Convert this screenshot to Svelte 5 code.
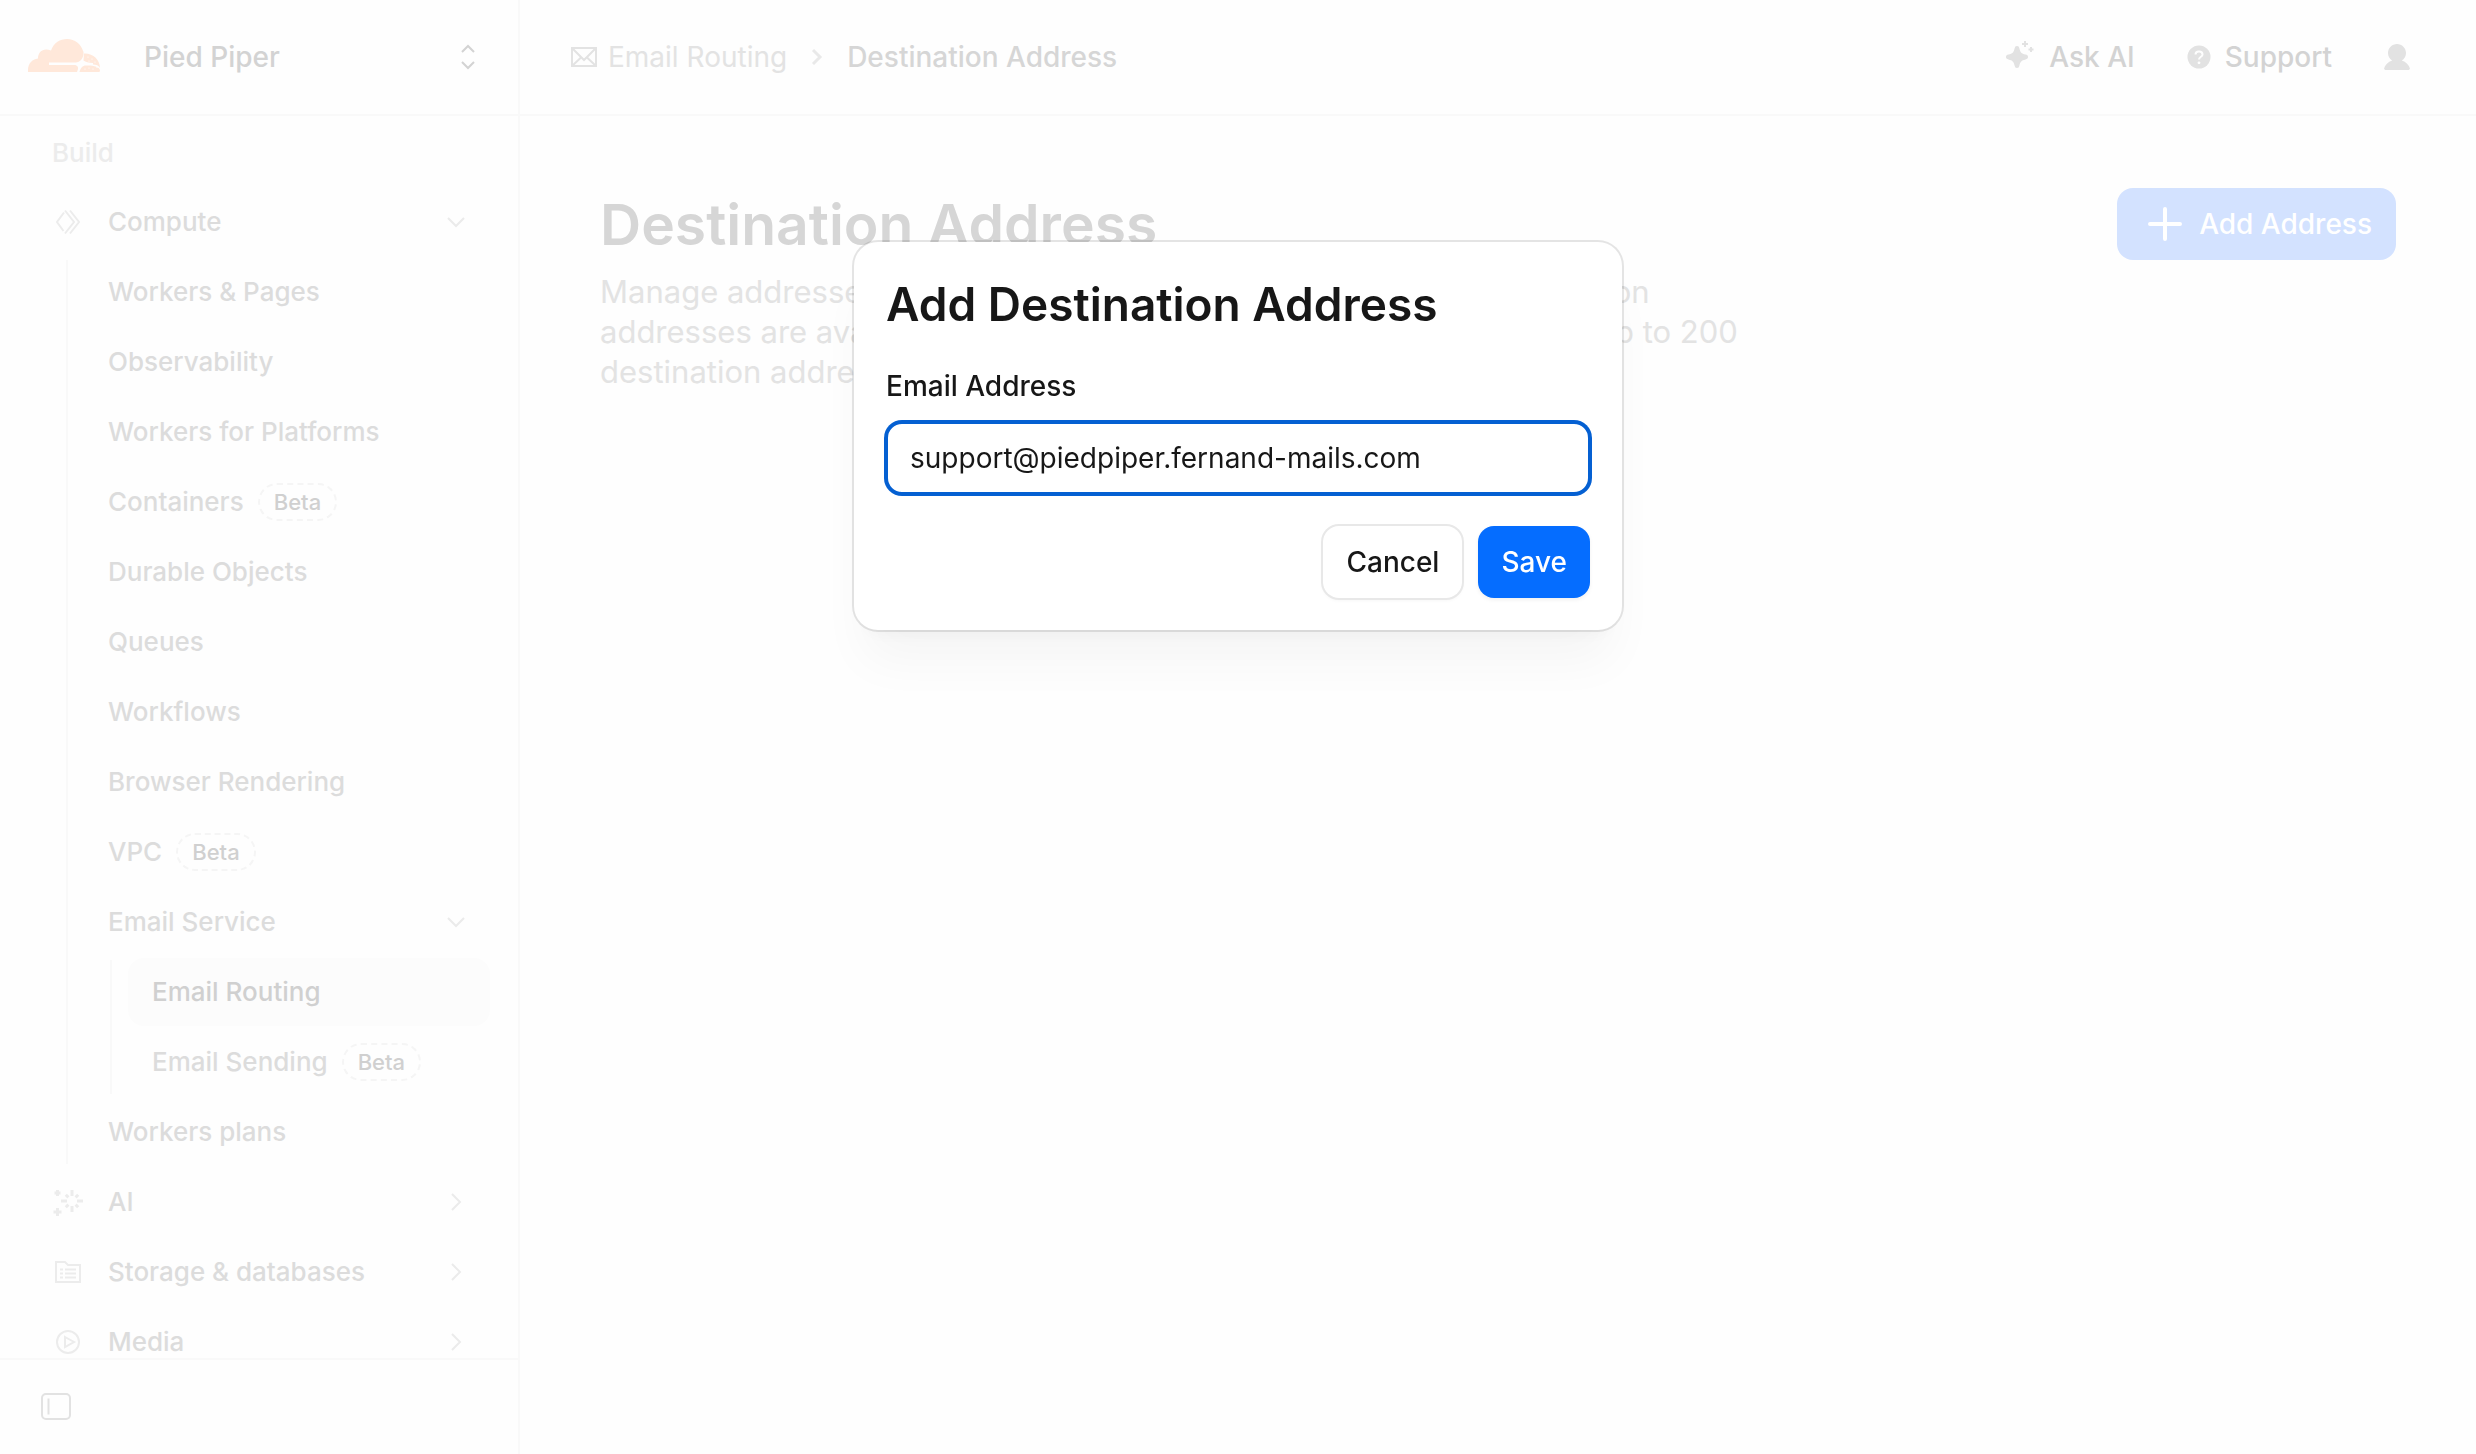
<script lang="ts">
	type NavItem = {
		label: string;
		icon?: string;
		beta?: boolean;
		active?: boolean;
		open?: boolean;
		group?: boolean;
		children?: NavItem[];
	};

	let nav = $state<NavItem[]>([
		{
			label: 'Compute',
			icon: 'workers',
			group: true,
			open: true,
			children: [
				{ label: 'Workers & Pages' },
				{ label: 'Observability' },
				{ label: 'Workers for Platforms' },
				{ label: 'Containers', beta: true },
				{ label: 'Durable Objects' },
				{ label: 'Queues' },
				{ label: 'Workflows' },
				{ label: 'Browser Rendering' },
				{ label: 'VPC', beta: true },
				{
					label: 'Email Service',
					group: true,
					open: true,
					children: [
						{ label: 'Email Routing', active: true },
						{ label: 'Email Sending', beta: true }
					]
				},
				{ label: 'Workers plans' }
			]
		},
		{ label: 'AI', icon: 'ai', group: true },
		{ label: 'Storage & databases', icon: 'storage', group: true },
		{ label: 'Media', icon: 'media', group: true }
	]);

	let showModal = $state(true);
	let email = $state('support@piedpiper.fernand-mails.com');

	function closeModal() {
		showModal = false;
	}

	function save(event: SubmitEvent) {
		event.preventDefault();
		closeModal();
	}
</script>

<svelte:head>
	<title>Destination Address</title>
</svelte:head>

{#snippet navIcon(name: string)}
	<svg class="nav-icon" viewBox="0 0 32 32" aria-hidden="true">
		{#if name === 'workers'}
			<path d="M12 6.500 5 16l6.500 9M13 4.500 22 16l-9 11.500M18 4.500 27 16l-9 11.500" />
		{:else if name === 'ai'}
			<path
				stroke-width="3"
				d="M20 4v6M20 20v6M9 15h6M25 15h6M13.800 8.800l2.600 2.600M23.600 18.600l2.600 2.600M26.200 8.800l-2.600 2.600M16.400 18.600l-2.600 2.600M5.500 4v6M2.500 7h6M5.500 22v8M1.500 26h8"
			/>
		{:else if name === 'storage'}
			<path d="M4 6h9l3 3h12v17H4z" />
			<path d="M8 13.500h3M13 13.500h11M8 17.500h3M13 17.500h11M8 21.500h3M13 21.500h11" />
		{:else if name === 'media'}
			<circle cx="16" cy="16" r="11" />
			<path d="M13 11l9 5-9 5z" />
		{/if}
	</svg>
{/snippet}

{#snippet navList(items: NavItem[], depth: number)}
	<ul class={['list', depth > 0 && 'nested']}>
		{#each items as item}
			<li>
				{#if item.group}
					<button class="row" aria-expanded={!!item.open} onclick={() => (item.open = !item.open)}>
						{#if item.icon}{@render navIcon(item.icon)}{/if}
						<span>{item.label}</span>
						<svg class="caret" viewBox="0 0 20 20" aria-hidden="true">
							<path d={item.open ? 'M2 6l8 8 8-8' : 'M6 2l8 8-8 8'} />
						</svg>
					</button>
				{:else}
					<a class={['row', item.active && 'active']} href="#{item.label}">
						<span>{item.label}</span>
						{#if item.beta}<span class="beta">Beta</span>{/if}
					</a>
				{/if}
				{#if item.open && item.children}
					{@render navList(item.children, depth + 1)}
				{/if}
			</li>
		{/each}
	</ul>
{/snippet}

<div class="layout">
	<aside class="sidebar">
		<div class="account">
			<svg class="logo" viewBox="0 0 72 36" aria-hidden="true">
				<path
					d="M0 33v-2c0-6 4-11 10-11.500C10 13 15 8.500 23 11.500 26 3.500 32 0 39 0c8 0 14 5 16.500 13 .5 6-3.500 10.500-8 10.500H21v2.500h25c3 0 4.500 2 4 4l-1 3z"
				/>
				<path d="M56 14.500c9-.5 16 6.500 16 14.500-1-2.500-4-3.500-7-3.500v-1.500c-4.500 0-7.500-1-9.500-2.500z" />
				<path d="M51.500 33c1-4 3-6.500 6.500-6.500 6-.5 14 1 14 5l-.5 1.500z" />
				<g class="dots">
					<circle cx="60" cy="18" r=".6" />
					<circle cx="64" cy="20" r=".6" />
					<circle cx="67" cy="23" r=".6" />
					<circle cx="61" cy="22" r=".6" />
					<circle cx="57" cy="30" r=".6" />
					<circle cx="61" cy="29" r=".6" />
					<circle cx="65" cy="30" r=".6" />
					<circle cx="69" cy="28.500" r=".6" />
				</g>
			</svg>
			<button class="switcher">
				<span>Pied Piper</span>
				<svg viewBox="0 0 16 26" aria-hidden="true">
					<path d="M2 8l6-6 6 6M2 18l6 6 6-6" />
				</svg>
			</button>
		</div>
		<nav class="nav" aria-label="Main">
			<p class="section">Build</p>
			{@render navList(nav, 0)}
		</nav>
		<div class="collapse">
			<button aria-label="Collapse sidebar">
				<svg viewBox="0 0 32 32" aria-hidden="true">
					<rect x="2" y="3" width="28" height="25" rx="4" />
					<path d="M8.500 7.500v16" />
				</svg>
			</button>
		</div>
	</aside>

	<div class="page">
		<header class="topbar">
			<nav class="crumbs" aria-label="Breadcrumb">
				<a href="#email-routing">
					<svg class="mail" viewBox="0 0 28 22" aria-hidden="true">
						<path d="M2 2h24v18H2zM2 2l12 12L26 2M2 20l9.500-9M26 20l-9.500-9" />
					</svg>
					Email Routing
				</a>
				<svg class="sep" viewBox="0 0 12 20" aria-hidden="true"><path d="M2 3l7 7-7 7" /></svg>
				<span class="current">Destination Address</span>
			</nav>
			<div class="tools">
				<button>
					<svg class="sparkle" viewBox="0 0 32 32" aria-hidden="true">
						<path
							d="M14 5c1.500 0 2 .8 2.400 2.500 1 4 2 5 6.100 6.100 1.700.4 2.500.9 2.500 2.400s-.8 2-2.500 2.400c-4.100 1.100-5.100 2.100-6.100 6.100-.4 1.700-.9 2.500-2.400 2.500s-2-.8-2.400-2.500c-1-4-2-5-6.100-6.100C3.800 18 3 17.500 3 16s.8-2 2.500-2.400c4.100-1.100 5.100-2.100 6.100-6.100C12 5.800 12.500 5 14 5z"
						/>
						<path class="line" d="M22 0v6M19 3h6M28 6v5M25.500 8.500h5" />
					</svg>
					Ask AI
				</button>
				<button>
					<svg class="help" viewBox="0 0 24 24" aria-hidden="true">
						<circle cx="12" cy="12" r="11.500" />
						<path d="M8.500 9.500c0-4 7-4 7 0 0 2.500-3.500 2-3.500 5" />
						<circle class="dot" cx="12" cy="17.800" r="1.400" />
					</svg>
					Support
				</button>
				<button aria-label="Profile">
					<svg class="user" viewBox="0 0 26 26" aria-hidden="true">
						<path
							d="M13 0c5 0 9 4 9 9 0 3.500-1.800 6-4.200 7.600C22 18 25 21 26 24.500L25 26H1l-1-1.500C1 21 4 18 8.200 16.600 5.800 15 4 12.500 4 9c0-5 4-9 9-9z"
						/>
					</svg>
				</button>
			</div>
		</header>

		<main class="content">
			<div class="intro">
				<h1>Destination Address</h1>
				<p>
					Manage addresses that your emails can be forwarded to. All destination<br />
					addresses are available to every zone in your account. You can add up to 200<br />
					destination addresses.
				</p>
			</div>
			<button class="add" onclick={() => (showModal = true)}>
				<svg viewBox="0 0 36 36" aria-hidden="true"><path d="M18 3v30M3 18h30" /></svg>
				Add Address
			</button>
		</main>
	</div>
</div>

{#if showModal}
	<div class="overlay">
		<form class="modal" role="dialog" aria-modal="true" aria-labelledby="modal-title" onsubmit={save}>
			<h2 id="modal-title">Add Destination Address</h2>
			<div class="field">
				<label for="email">Email Address</label>
				<input id="email" type="email" bind:value={email} />
			</div>
			<div class="actions">
				<button class="cancel" type="button" onclick={closeModal}>Cancel</button>
				<button class="save" type="submit">Save</button>
			</div>
		</form>
	</div>
{/if}

<style>
	:global(body) {
		background: #fefefe;
		font-family: Inter, 'Liberation Sans', sans-serif;
		font-size: 28px;
		line-height: 40px;
		font-weight: 500;
		color: #d3d3d3;
	}

	h1,
	h2,
	p,
	ul {
		margin: 0;
		padding: 0;
	}

	h1,
	h2 {
		font-weight: 600;
	}

	button,
	input {
		box-sizing: border-box;
		font: inherit;
		color: inherit;
	}

	button {
		padding: 0;
		border: 0;
		background: none;
		cursor: pointer;
	}

	a {
		color: inherit;
		text-decoration: none;
	}

	svg {
		flex-shrink: 0;
		fill: none;
		stroke: currentColor;
		stroke-width: 2;
	}

	.layout {
		display: flex;
		min-height: 100vh;
	}

	.sidebar {
		position: sticky;
		top: 0;
		display: flex;
		flex-direction: column;
		flex: 0 0 520px;
		box-sizing: border-box;
		height: 100vh;
		border-right: 2px solid #f9f9f9;
	}

	.account,
	.topbar {
		display: flex;
		align-items: center;
		flex-shrink: 0;
		box-sizing: border-box;
		height: 116px;
		border-bottom: 2px solid #f9f9f9;
	}

	.account {
		gap: 44px;
		padding: 0 40px 0 28px;
	}

	.logo {
		width: 72px;
		height: 36px;
		fill: #ffe8da;
		stroke: none;
	}

	.dots {
		fill: #fff;
	}

	.switcher {
		display: flex;
		flex: 1;
		align-items: center;
		justify-content: space-between;
	}

	.switcher svg {
		width: 20px;
		height: 26px;
	}

	.nav {
		flex: 1;
		min-height: 0;
		padding: 19px 28px 0;
		overflow: hidden;
		font-size: 26px;
		color: #dcdcdc;
	}

	.section {
		padding: 0 24px;
		margin-bottom: 17px;
		line-height: 36px;
		color: #ececec;
	}

	.list {
		display: grid;
		gap: 2px;
		list-style: none;
	}

	.nested {
		margin: 2px 0 0 38px;
		padding-left: 18px;
		background: linear-gradient(#f9f9f9, #f9f9f9) no-repeat 0 2px / 2px calc(100% - 4px);
	}

	.nested .nested {
		margin-left: 26px;
		padding-left: 18px;
	}

	.row {
		display: flex;
		align-items: center;
		box-sizing: border-box;
		width: 100%;
		height: 68px;
		padding: 0 24px;
		border-radius: 16px;
	}

	.active {
		background: #fcfcfc;
		color: #d0d0d0;
	}

	.nav-icon {
		width: 32px;
		height: 32px;
		margin-right: 24px;
		color: #ececec;
	}

	.caret {
		width: 20px;
		height: 20px;
		margin-left: auto;
		color: #ebebeb;
	}

	.beta {
		margin-left: 14px;
		padding: 0 14px;
		border: 2px dashed #f5f5f5;
		border-radius: 19px;
		font-size: 22px;
		line-height: 34px;
		color: #d0d0d0;
	}

	.collapse {
		display: flex;
		align-items: center;
		flex-shrink: 0;
		box-sizing: border-box;
		height: 96px;
		padding: 0 40px;
		border-top: 2px solid #f9f9f9;
	}

	.collapse svg {
		display: block;
		width: 32px;
		height: 32px;
		color: #e2e2e2;
	}

	.page {
		flex: 1;
		min-width: 0;
	}

	.topbar {
		justify-content: space-between;
		padding: 0 66px 0 50px;
	}

	.crumbs,
	.crumbs a,
	.tools,
	.tools button {
		display: flex;
		align-items: center;
	}

	.crumbs {
		gap: 24px;
	}

	.crumbs a {
		gap: 10px;
		font-weight: 400;
		color: #e3e3e3;
	}

	.mail {
		width: 28px;
		height: 22px;
	}

	.sep {
		width: 12px;
		height: 20px;
		color: #e9e9e9;
		stroke-width: 3;
	}

	.current {
		color: #d6d6d6;
	}

	.tools {
		gap: 52px;
	}

	.tools button {
		gap: 14px;
	}

	.tools svg {
		fill: #e2e2e2;
		stroke: none;
	}

	.sparkle {
		width: 32px;
		height: 32px;
	}

	.tools .line {
		stroke: #e2e2e2;
		stroke-width: 2;
	}

	.help {
		width: 24px;
		height: 24px;
	}

	.help path {
		fill: none;
		stroke: #fefefe;
		stroke-width: 2;
	}

	.help .dot {
		fill: #fefefe;
	}

	.user {
		width: 26px;
		height: 26px;
	}

	.content {
		display: flex;
		align-items: flex-start;
		justify-content: space-between;
		padding: 72px 80px;
	}

	.intro {
		display: grid;
		gap: 12px;
	}

	h1 {
		font-size: 57px;
		line-height: 74px;
		margin-bottom: -2px;
		color: #d6d6d6;
	}

	.intro p {
		font-size: 31px;
		line-height: 40px;
		font-weight: 400;
		color: #e3e3e3;
	}

	.add {
		display: flex;
		align-items: center;
		gap: 16px;
		height: 72px;
		padding: 0 24px 0 30px;
		border-radius: 16px;
		background: #d3e2ff;
		color: #fff;
	}

	.add svg {
		width: 36px;
		height: 36px;
		stroke-width: 4;
		stroke-linecap: round;
	}

	.overlay {
		position: fixed;
		inset: 0;
		display: flex;
		align-items: flex-start;
		justify-content: center;
		padding-top: 242px;
	}

	.modal {
		display: grid;
		gap: 32px;
		box-sizing: border-box;
		width: 768px;
		padding: 32px;
		border-radius: 24px;
		background: #fff;
		box-shadow:
			0 0 0 2px rgba(0, 0, 0, 0.1),
			0 40px 50px -10px rgba(0, 0, 0, 0.04),
			0 16px 20px -12px rgba(0, 0, 0, 0.04);
		color: #171717;
	}

	h2 {
		font-size: 46px;
		line-height: 60px;
	}

	.field {
		display: grid;
		gap: 16px;
	}

	.field input {
		width: 100%;
		height: 72px;
		padding: 0 22px;
		border: 2px solid #0560d2;
		border-radius: 16px;
		outline: 0;
		background: #fff;
		box-shadow: 0 0 0 2px #0560d2;
		font-weight: 400;
	}

	.actions {
		display: flex;
		justify-content: flex-end;
		gap: 16px;
	}

	.actions button {
		height: 72px;
		padding: 0 23px;
		border-radius: 16px;
	}

	.cancel {
		box-shadow:
			0 0 0 2px #e8e8e8,
			0 2px 4px rgba(0, 0, 0, 0.05);
	}

	.actions .save {
		background: #056dff;
		box-shadow: 0 2px 4px rgba(0, 0, 0, 0.06);
		color: #fff;
	}
</style>
